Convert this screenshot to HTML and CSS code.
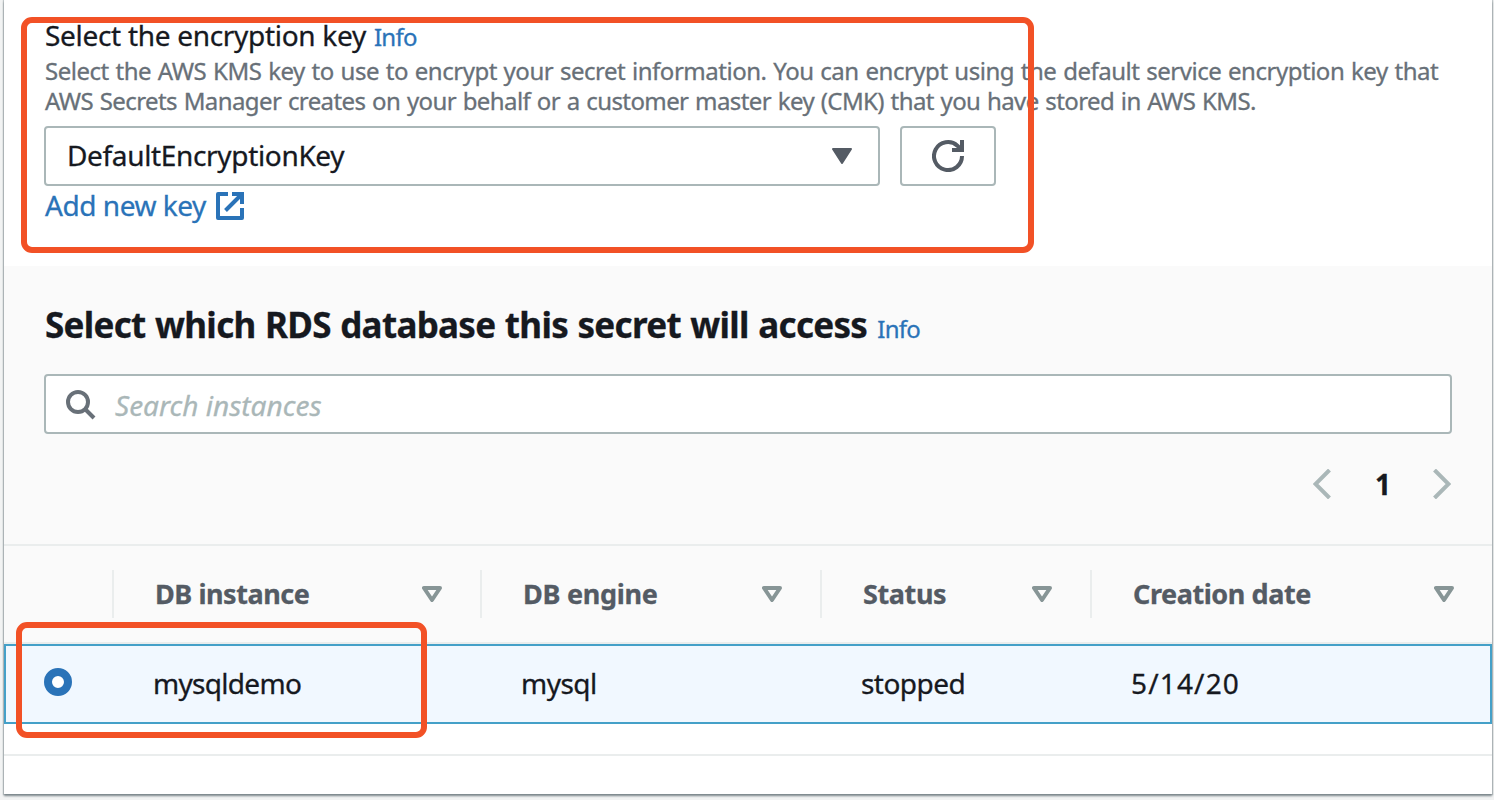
FILE: index.html
```html
<!DOCTYPE html>
<html lang="en">
<head>
<meta charset="utf-8">
<title>Store a new secret</title>
<link rel="stylesheet" href="styles.css">
</head>
<body>
<main class="card">
  <section class="key-section">
    <div class="field-label"><span class="label-text">Select the encryption key</span><a class="info">Info</a></div>
    <p class="description"><span class="line-one">Select the AWS KMS key to use to encrypt your secret information. You can encrypt using the default service encryption key that</span><br><span class="line-two">AWS Secrets Manager creates on your behalf or a customer master key (CMK) that you have stored in AWS KMS.</span></p>
    <div class="key-row">
      <div class="select"><span class="select-text">DefaultEncryptionKey</span>
        <svg width="20" height="16" viewBox="0 0 20 16"><path d="M1 1h18l-9 14z" fill="#545b64" stroke="#545b64" stroke-width="2" stroke-linejoin="round"/></svg>
      </div>
      <button class="refresh" aria-label="Refresh">
        <svg width="32" height="32" viewBox="0 0 32 32" fill="none" stroke="#545b64" stroke-width="4"><path d="M30 16a14 14 0 1 1-4.600-10.300L29 9.500"/><path d="M30 0v10H20"/></svg>
      </button>
    </div>
    <a class="add-key"><span class="add-text">Add new key</span>
      <svg width="28" height="28" viewBox="0 0 28 28" fill="none" stroke="#2a73b8" stroke-width="4"><path d="M12 2H2v24h24V16" stroke-linejoin="round"/><path d="M16 2h10v10M26 2L9.500 18.500"/></svg>
    </a>
  </section>

  <section class="db-section">
    <div class="db-top">
      <h2 class="heading"><span class="heading-text">Select which RDS database this secret will access</span><a class="info">Info</a></h2>
      <div class="search">
        <svg width="30" height="30" viewBox="0 0 30 30" fill="none" stroke="#687078" stroke-width="4"><circle cx="12" cy="12" r="10"/><path d="M18.500 18.500l9.500 9.500"/></svg>
        <span class="placeholder">Search instances</span>
      </div>
      <div class="pagination">
        <svg width="18" height="30" viewBox="0 0 18 30"><path d="M16.500 1L2.500 15l14 14" fill="none" stroke="#aab7b8" stroke-width="4"/></svg>
        <span class="page">1</span>
        <svg width="18" height="30" viewBox="0 0 18 30"><path d="M1.500 1l14 14-14 14" fill="none" stroke="#aab7b8" stroke-width="4"/></svg>
      </div>
    </div>
    <div class="grid head">
      <div class="cell"></div>
      <div class="cell divided"><span class="h-instance">DB instance</span><svg class="sort" width="20" height="16" viewBox="0 0 20 16"><path d="M2 2h16l-8 12z"/></svg></div>
      <div class="cell divided"><span class="h-engine">DB engine</span><svg class="sort" width="20" height="16" viewBox="0 0 20 16"><path d="M2 2h16l-8 12z"/></svg></div>
      <div class="cell divided"><span class="h-status">Status</span><svg class="sort" width="20" height="16" viewBox="0 0 20 16"><path d="M2 2h16l-8 12z"/></svg></div>
      <div class="cell divided"><span class="h-date">Creation date</span><svg class="sort" width="20" height="16" viewBox="0 0 20 16"><path d="M2 2h16l-8 12z"/></svg></div>
    </div>
    <div class="grid row">
      <div class="cell"><span class="radio"></span></div>
      <div class="cell"><span class="r-instance">mysqldemo</span></div>
      <div class="cell"><span class="r-engine">mysql</span></div>
      <div class="cell"><span class="r-status">stopped</span></div>
      <div class="cell"><span class="r-date">5/14/20</span></div>
    </div>
    <div class="table-end"></div>
  </section>
</main>
<div class="mark mark-key"></div>
<div class="mark mark-instance"></div>
</body>
</html>
```
FILE: styles.css
```css
* { box-sizing: border-box; }
body {
  margin: 0;
  height: 800px;
  padding: 0 2px 6px 4px;
  overflow: hidden;
  position: relative;
  background: #f2f3f3;
  color: #16191f;
  font: 28px/40px "Noto Sans", sans-serif;
  white-space: nowrap;
  -webkit-text-stroke: 0.3px;
}
.card {
  height: 794px;
  background: #fff;
  box-shadow: 0 2px 2px 0 #7d878c, 0 0 1px 1px #c3c9cb;
}
.key-section { height: 266px; padding: 15px 40px 0; }
.field-label { height: 41px; padding-left: 1px; }
.label-text { letter-spacing: -0.3px; }
.info { margin-left: 8px; color: #2a73b8; font-size: 24px; font-weight: 400; letter-spacing: -0.7px; word-spacing: 0; }
.description { margin: 0; height: 60px; padding-left: 1px; color: #687078; font-size: 24px; line-height: 30px; word-spacing: 1px; }
.line-one { letter-spacing: -0.48px; }
.line-two { letter-spacing: -0.59px; }
.key-row { display: flex; gap: 20px; margin-top: 10px; }
.select {
  display: flex; align-items: center; justify-content: space-between;
  width: 836px; height: 60px; padding: 0 26px 0 21px;
  border: 2px solid #aab7b8; border-radius: 4px; background: #fff;
}
.select-text { padding-bottom: 2px; letter-spacing: -0.34px; }
.refresh {
  display: flex; align-items: center; justify-content: center;
  width: 96px; height: 60px; padding: 0;
  border: 2px solid #aab7b8; border-radius: 4px; background: #fff;
}
.add-key { display: flex; align-items: center; gap: 10px; height: 40px; padding-left: 1px; color: #2a73b8; }
.add-text { padding-bottom: 2px; letter-spacing: -0.45px; }
.db-section { background: #fff; }
.db-top { height: 278px; padding: 35px 40px 0; background: #fafafa; }
.heading { margin: 0; height: 48px; padding-left: 1px; font-size: 35px; line-height: 48px; font-weight: 700; }
.heading-text { letter-spacing: -0.69px; word-spacing: 1px; }
.heading .info { margin-left: 10px; }
.search {
  display: flex; align-items: center; gap: 19px;
  height: 60px; margin-top: 25px; padding-left: 20px;
  border: 2px solid #aab7b8; border-radius: 4px; background: #fff;
}
.search svg { margin-top: 1px; }
.placeholder { padding-top: 2px; color: #aab7b8; font-style: italic; }
.pagination { display: flex; justify-content: flex-end; align-items: center; height: 100px; padding-right: 1px; gap: 43px; }
.page { font-weight: 700; margin: 0 -1px 0 1px; }
.grid { display: grid; grid-template-columns: 108px 368px 340px 270px 1fr; }
.head { height: 100px; background: #fafafa; border: solid #eaeded; border-width: 2px 0; color: #545b64; font-size: 27px; font-weight: 700; }
.cell { display: flex; align-items: center; justify-content: space-between; padding: 0 38px 0 41px; }
.cell:first-child { padding-left: 40px; }
.divided { height: 48px; align-self: center; border-left: 2px solid #eaeded; }
.h-instance { letter-spacing: -0.45px; }
.h-engine { letter-spacing: -0.28px; }
.h-status { letter-spacing: -0.4px; }
.h-date { letter-spacing: -0.43px; }
.sort { fill: none; stroke: #879596; stroke-width: 4; stroke-linejoin: round; }
.row { height: 80px; padding-bottom: 2px; background: #f1f8ff; box-shadow: inset 0 0 0 2px #44a0c8; }
.r-instance { letter-spacing: -0.7px; }
.r-engine { letter-spacing: -0.5px; }
.r-status { letter-spacing: -0.55px; }
.r-date { letter-spacing: 1.15px; }
.radio { width: 28px; height: 28px; margin-bottom: 2px; border: 8px solid #2a73b8; border-radius: 50%; background: #fff; }
.table-end { height: 32px; border-bottom: 2px solid #eaeded; }
.mark { position: absolute; border: 6px solid #f25126; border-radius: 11px; }
.mark-key { left: 21px; top: 17px; width: 1013px; height: 236px; }
.mark-instance { left: 16px; top: 622px; width: 411px; height: 116px; }
```
